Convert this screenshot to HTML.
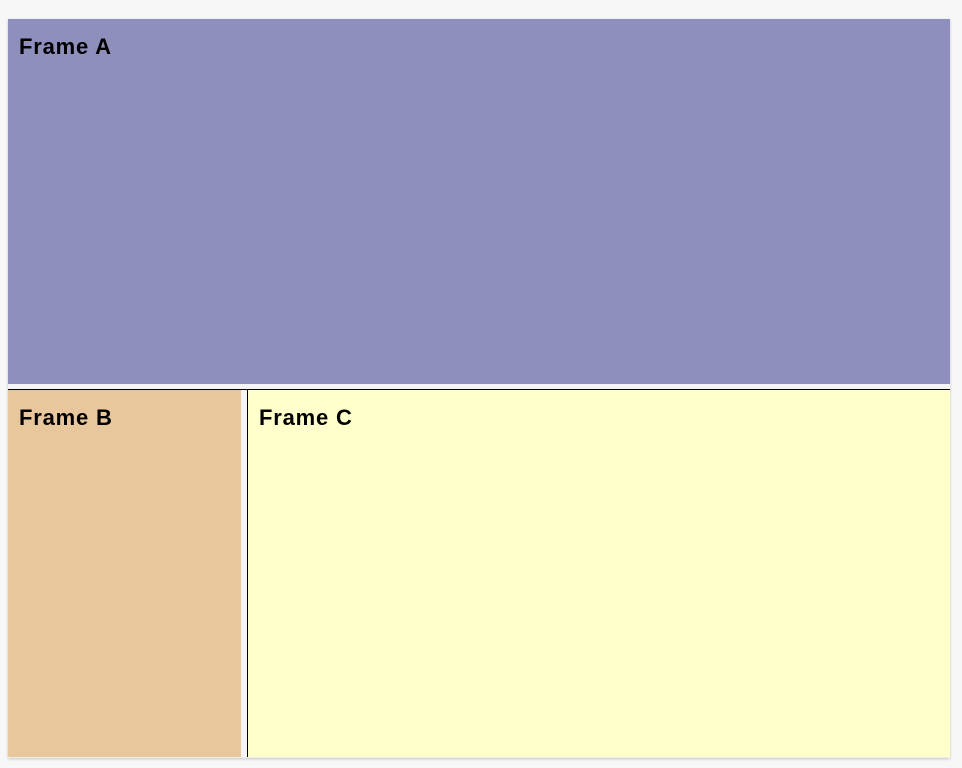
<!DOCTYPE html>
<html><head><style>
html,body{margin:0;padding:0;background:#f7f7f7;width:962px;height:768px;overflow:hidden}
.f{position:absolute;font-family:"Liberation Sans",sans-serif;font-weight:bold;font-size:22px;letter-spacing:0.8px;color:#000;box-sizing:border-box;padding:15px 0 0 11px}
</style></head><body>
<div style="position:absolute;left:8px;top:19px;width:942px;height:739px;background:#eeeeee;box-shadow:0 1px 3px rgba(0,0,0,.2)"></div>
<div class="f" style="left:8px;top:19px;width:942px;height:365px;background:#8e8fbc">Frame A</div>
<div style="position:absolute;left:8px;top:384px;width:942px;height:5px;background:#f4f4f4"></div>
<div style="position:absolute;left:8px;top:389px;width:942px;height:1px;background:#000"></div>
<div class="f" style="left:8px;top:390px;width:233px;height:367px;background:#e9c79d">Frame B</div>
<div style="position:absolute;left:241px;top:390px;width:6px;height:367px;background:#f4f4f4"></div>
<div style="position:absolute;left:247px;top:390px;width:1px;height:367px;background:#000"></div>
<div class="f" style="left:248px;top:390px;width:702px;height:367px;background:#ffffcc">Frame C</div>
</body></html>
